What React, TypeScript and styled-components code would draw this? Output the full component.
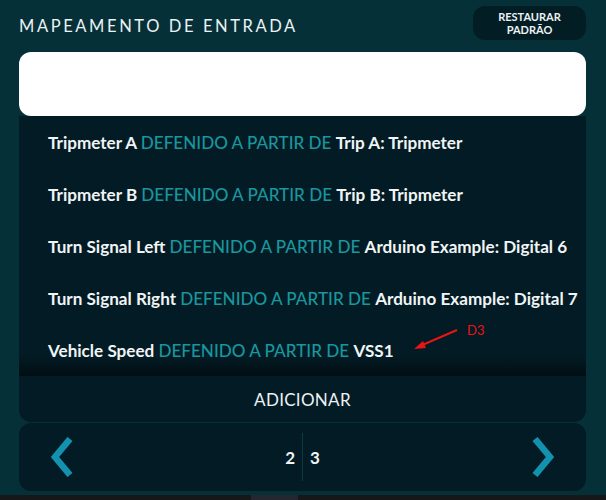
import React from 'react'
import styled, { createGlobalStyle } from 'styled-components'

const GlobalStyle = createGlobalStyle`
  html, body {
    margin: 0;
    padding: 0;
    background: rgb(6, 48, 56);
    font-family: Lato, "Noto Sans", sans-serif;
  }
`

const Screen = styled.div`
  position: relative;
  width: 606px;
  height: 500px;
  overflow: hidden;
  background: rgb(6, 48, 56);
  display: flex;
  flex-direction: column;
`

const Header = styled.div`
  display: flex;
  align-items: center;
  justify-content: space-between;
  height: 46px;
  padding: 6px 20px 0 19px;
  box-sizing: border-box;
`

const Title = styled.h1`
  margin: 0;
  color: rgb(236, 242, 243);
  font-size: 16.5px;
  font-weight: 400;
  letter-spacing: 2.6px;
`

const RestoreButton = styled.button`
  width: 113px;
  height: 34px;
  border: none;
  border-radius: 12px;
  background: rgb(3, 29, 37);
  color: rgb(236, 242, 243);
  font-family: Lato, sans-serif;
  font-size: 11px;
  font-weight: 700;
  line-height: 13px;
  padding: 0;
  margin-top: -6px;
`

const Body = styled.div`
  margin: 6px 20px 0 19px;
  display: flex;
  flex-direction: column;
`

const SearchBox = styled.div`
  height: 64px;
  background: #ffffff;
  border-radius: 12px;
`

const ListCard = styled.div`
  background: rgb(3, 27, 36);
  border-radius: 0 0 12px 12px;
  overflow: hidden;
`

const List = styled.div`
  height: 260px;
  background: linear-gradient(to bottom, rgb(3, 27, 36) 0, rgb(3, 27, 36) 240px, rgb(1, 14, 19) 260px);
`

const Row = styled.div`
  height: 52px;
  display: flex;
  align-items: center;
  padding-left: 29px;
  font-size: 17.1px;
  white-space: pre;
`

const Name = styled.span`
  color: rgb(240, 244, 245);
  font-weight: 700;
`

const Keyword = styled.span`
  color: rgb(25, 150, 158);
  font-weight: 500;
`

const AddButton = styled.div`
  height: 46px;
  display: flex;
  align-items: center;
  justify-content: center;
  color: rgb(236, 242, 243);
  font-size: 17px;
  font-weight: 400;
  letter-spacing: 0.3px;
`

const Pager = styled.div`
  margin-top: 1px;
  height: 68px;
  background: rgb(3, 27, 36);
  border-radius: 12px;
  display: flex;
  align-items: center;
  justify-content: space-between;
  padding: 0 32px;
  box-sizing: border-box;
`

const Pages = styled.div`
  display: flex;
  align-items: center;
  height: 48px;
`

const PageNum = styled.span`
  color: rgb(240, 244, 245);
  font-size: 17px;
  font-weight: 700;
  padding: 0 7px;
`

const Divider = styled.div`
  width: 1px;
  align-self: stretch;
  background: rgb(9, 60, 66);
`

const BottomStrip = styled.div`
  position: absolute;
  left: 0;
  right: 0;
  bottom: 0;
  height: 5px;
  background: rgb(21, 23, 25);
`

const StripTab = styled.div`
  margin-left: 251px;
  width: 47px;
  height: 5px;
  background: rgb(36, 39, 48);
`

const Annotation = styled.div`
  position: absolute;
  left: 410px;
  top: 320px;
`

const AnnotationLabel = styled.span`
  position: absolute;
  left: 57px;
  top: 2px;
  color: rgb(235, 20, 20);
  font-size: 13px;
  font-weight: 400;
`

const Chevron = ({ dir }: { dir: 'left' | 'right' }) => (
  <svg width="24" height="40" viewBox="0 0 24 40">
    <polyline
      points={dir === 'left' ? '19,2 4,20 19,38' : '5,2 20,20 5,38'}
      fill="none"
      stroke="rgb(18, 146, 174)"
      strokeWidth="6.5"
      strokeLinejoin="miter"
    />
  </svg>
)

const rows = [
  ['Tripmeter A', 'Trip A: Tripmeter'],
  ['Tripmeter B', 'Trip B: Tripmeter'],
  ['Turn Signal Left', 'Arduino Example: Digital 6'],
  ['Turn Signal Right', 'Arduino Example: Digital 7'],
  ['Vehicle Speed', 'VSS1'],
]

export default function App() {
  return (
    <Screen>
      <GlobalStyle />
      <Header>
        <Title>MAPEAMENTO DE ENTRADA</Title>
        <RestoreButton>
          RESTAURAR
          <br />
          PADRÃO
        </RestoreButton>
      </Header>
      <Body>
        <SearchBox />
        <ListCard>
          <List>
            {rows.map(([name, source]) => (
              <Row key={name}>
                <Name>{name} </Name>
                <Keyword>DEFENIDO A PARTIR DE </Keyword>
                <Name>{source}</Name>
              </Row>
            ))}
          </List>
          <AddButton>ADICIONAR</AddButton>
        </ListCard>
        <Pager>
          <Chevron dir="left" />
          <Pages>
            <PageNum>2</PageNum>
            <Divider />
            <PageNum>3</PageNum>
          </Pages>
          <Chevron dir="right" />
        </Pager>
      </Body>
      <Annotation>
        <svg width="52" height="32" viewBox="0 0 52 32">
          <line x1="47" y1="10" x2="10" y2="26" stroke="rgb(235, 20, 20)" strokeWidth="2" />
          <polygon points="4,29 13,21 16,28" fill="rgb(235, 20, 20)" />
        </svg>
        <AnnotationLabel>D3</AnnotationLabel>
      </Annotation>
      <BottomStrip>
        <StripTab />
      </BottomStrip>
    </Screen>
  )
}
